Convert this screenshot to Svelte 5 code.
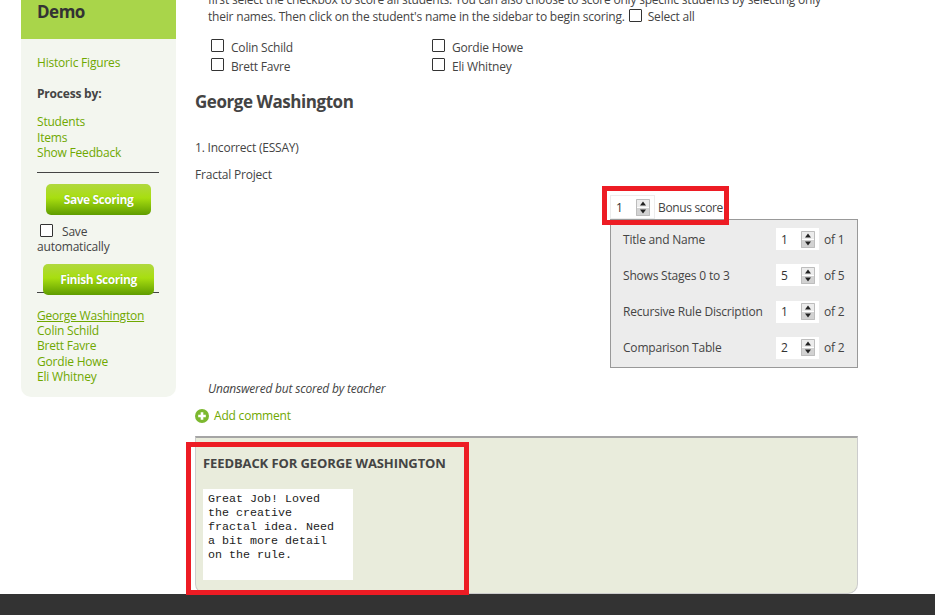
<script>
  const nav = ['Students', 'Items', 'Show Feedback'];
  const students = ['George Washington', 'Colin Schild', 'Brett Favre', 'Gordie Howe', 'Eli Whitney'];
  const rubric = [
    { label: 'Title and Name', value: 1, max: 1 },
    { label: 'Shows Stages 0 to 3', value: 5, max: 5 },
    { label: 'Recursive Rule Discription', value: 1, max: 2 },
    { label: 'Comparison Table', value: 2, max: 2 }
  ];
  const feedback = ['Great Job! Loved', 'the creative', 'fractal idea. Need', 'a bit more detail', 'on the rule.'];
</script>

{#snippet spinner(value)}
  <span class="num">
    <span class="val">{value}</span>
    <span class="spin">
      <svg width="14" height="17" viewBox="0 0 14 17">
        <rect x="0" y="0" width="14" height="8" fill="#ececec" />
        <rect x="0" y="9" width="14" height="8" fill="#d2d2d2" />
        <path d="M0.5 0.5H13.5V16.5H0.5Z" fill="none" stroke="#bdbdbd" />
        <path d="M7 2.5L10 6.5H4Z" fill="#222" />
        <path d="M7 14.5L4 10.5H10Z" fill="#222" />
      </svg>
    </span>
  </span>
{/snippet}

<div class="page">
  <div class="columns">
    <aside class="side">
      <div class="brand">Demo</div>
      <div class="side-body">
        <a class="link first" href="#a">Historic Figures</a>
        <p class="process">Process by:</p>
        <ul class="list">
          {#each nav as n}<li><a class="link" href="#a">{n}</a></li>{/each}
        </ul>
        <div class="rule"></div>
        <button class="btn save">Save Scoring</button>
        <label class="auto"><input type="checkbox" class="cb" /><span class="auto-t">Save</span><br />automatically</label>
        <div class="finish-wrap">
          <div class="rule under"></div>
          <button class="btn finish">Finish Scoring</button>
        </div>
        <ul class="list names">
          {#each students as s, i}<li><a class="link" class:cur={i === 0} href="#a">{s}</a></li>{/each}
        </ul>
      </div>
    </aside>

    <main class="main">
      <p class="intro">first select the checkbox to score all students. You can also choose to score only specific students by selecting only<br />their names. Then click on the student's name in the sidebar to begin scoring. <input type="checkbox" class="cb inl" />Select all</p>
      <div class="picks">
        <label class="pick"><input type="checkbox" class="cb" />Colin Schild</label>
        <label class="pick"><input type="checkbox" class="cb" />Gordie Howe</label>
        <label class="pick"><input type="checkbox" class="cb" />Brett Favre</label>
        <label class="pick"><input type="checkbox" class="cb" />Eli Whitney</label>
      </div>
      <h2 class="student">George Washington</h2>
      <p class="q">1. Incorrect (ESSAY)</p>
      <p class="q2">Fractal Project</p>
      <div class="scoring">
        <div class="bonus">{@render spinner(1)}<span class="b-label">Bonus score</span></div>
        <div class="rubric">
          {#each rubric as r}
            <div class="row">
              <span class="r-label">{r.label}</span>
              {@render spinner(r.value)}
              <span class="of">of {r.max}</span>
            </div>
          {/each}
        </div>
      </div>
      <p class="note">Unanswered but scored by teacher</p>
      <a class="add" href="#a">
        <svg width="14" height="14" viewBox="0 0 14 14"><circle cx="7" cy="7" r="7" fill="#7cb82f" /><path d="M7 3.2V10.8M3.2 7H10.8" stroke="#fff" stroke-width="2.6" /></svg>
        <span>Add comment</span>
      </a>
      <section class="fb">
        <h3>FEEDBACK FOR GEORGE WASHINGTON</h3>
        <div class="fb-text">
          {#each feedback as line}<div>{line}</div>{/each}
        </div>
      </section>
    </main>
  </div>
  <footer class="foot"></footer>
  <div class="mark m1"></div>
  <div class="mark m2"></div>
</div>

<style>
  :global(body) { margin: 0; background: #fff; }
  .page {
    position: relative;
    height: 615px;
    overflow: hidden;
    display: flex;
    flex-direction: column;
    font-family: "Open Sans", "Noto Sans", sans-serif;
    font-size: 12px;
    letter-spacing: -0.2px;
    color: #444;
  }
  .columns { flex: 1; min-height: 0; display: flex; align-items: flex-start; padding-left: 21px; gap: 19px; }
  .foot { height: 21px; background: #333; flex: none; }
  p, h2, h3, ul { margin: 0; padding: 0; }
  ul { list-style: none; }
  a { text-decoration: none; }
  .link { color: #6fa800; }
  .link.cur { text-decoration: underline; }

  .side { width: 155px; background: #f3f6ef; border-radius: 0 0 10px 10px; height: 397px; flex: none; }
  .brand { height: 39px; box-sizing: border-box; background: #a9d54a; color: #333; font-weight: 700; font-size: 17px; letter-spacing: -0.5px; padding-left: 16px; line-height: 23px; }
  .side-body { padding: 16px 16px 0; display: flex; flex-direction: column; align-items: flex-start; }
  .first { line-height: 16px; }
  .process { font-weight: 700; color: #444; margin-top: 15px; line-height: 16px; }
  .list { margin-top: 12px; line-height: 15.5px; }
  .rule { width: 122px; border-top: 1px solid #444; margin-top: 11px; height: 0; }
  .btn {
    display: block; border: 0; padding: 0; color: #fff; font: 700 12px "Open Sans", sans-serif; letter-spacing: -0.45px;
    border-radius: 5px; height: 31px;
    background: linear-gradient(#b0d83f, #a8de10 45%, #5f9c00);
    text-shadow: 0 0 1px #5f9c00;
  }
  .save { width: 105px; margin: 11px 0 0 9px; }
  .auto { display: block; margin-top: 9px; line-height: 15px; }
  .auto .cb { margin: 0 9px 0 3px; vertical-align: -1px; }
  .finish-wrap { position: relative; margin-top: 10px; width: 122px; height: 31px; }
  .under { position: absolute; left: 0; top: 28px; margin: 0; }
  .finish { position: relative; width: 111px; margin-left: 6px; }
  .names { margin-top: 13px; line-height: 15.4px; }

  .cb {
    appearance: none; -webkit-appearance: none; box-sizing: border-box;
    width: 13px; height: 13px; margin: 0; border: 1px solid #333; background: #fff; border-radius: 1px;
  }

  .main { width: 663px; flex: none; margin-top: -9px; }
  .intro { line-height: 17px; padding-left: 13px; }
  .inl { vertical-align: -1px; margin: 0 6px 0 1px; }
  .picks { display: grid; grid-template-columns: 221px 221px; margin: 15px 0 0 16px; row-gap: 4px; }
  .pick { display: flex; align-items: center; line-height: 15px; height: 15px; }
  .pick .cb { margin: 0 7px 4px 0; }
  .student { font-size: 17px; font-weight: 700; letter-spacing: -0.45px; color: #444; line-height: 24px; margin-top: 16px; }
  .q { line-height: 16px; margin-top: 26px; }
  .q2 { line-height: 16px; margin-top: 11px; }
  .scoring { margin: 12px 0 0 415px; width: 248px; }
  .bonus { display: flex; align-items: center; gap: 3px; height: 24px; }
  .b-label { letter-spacing: -0.35px; }
  .num { box-sizing: border-box; width: 45px; height: 24px; background: #fff; border: 1px solid #ececec; display: flex; align-items: center; justify-content: space-between; padding: 0 4px 0 5px; color: #333; flex: none; }
  .val { font-size: 12px; }
  .spin { display: flex; }
  .rubric { box-sizing: border-box; height: 149px; background: #ececec; border: 1px solid #999; padding: 7px 12px; display: flex; flex-direction: column; justify-content: space-between; }
  .row { display: flex; align-items: center; height: 24px; }
  .r-label { width: 152px; flex: none; color: #444; white-space: nowrap; }
  .of { margin-left: 4px; white-space: nowrap; flex: none; }
  .note { font-style: italic; margin: 13px 0 0 13px; line-height: 16px; }
  .add { display: flex; align-items: center; gap: 5px; color: #6fa800; margin-top: 11px; line-height: 16px; }
  .fb { box-sizing: border-box; margin-top: 12px; height: 158px; background: #e9ecdc; border-top: 2px solid #a5a5a5; border-left: 1px solid #ccc; border-right: 1px solid #ccc; border-bottom: 1px solid #ccc; border-radius: 0 0 10px 10px; padding: 16px 7px 0; }
  .fb h3 { font-size: 13px; font-weight: 700; letter-spacing: -0.1px; color: #444; line-height: 18px; }
  .fb-text { box-sizing: border-box; margin-top: 17px; width: 150px; height: 91px; background: #fff; padding: 3px 5px; font-family: "Liberation Mono", monospace; font-size: 11.67px; letter-spacing: 0; line-height: 14px; color: #222; }

  .mark { position: absolute; box-sizing: border-box; border: 5px solid #ed1c24; }
  .m1 { left: 602px; top: 186px; width: 127px; height: 39px; }
  .m2 { left: 186px; top: 442px; width: 283px; height: 153px; }
</style>
